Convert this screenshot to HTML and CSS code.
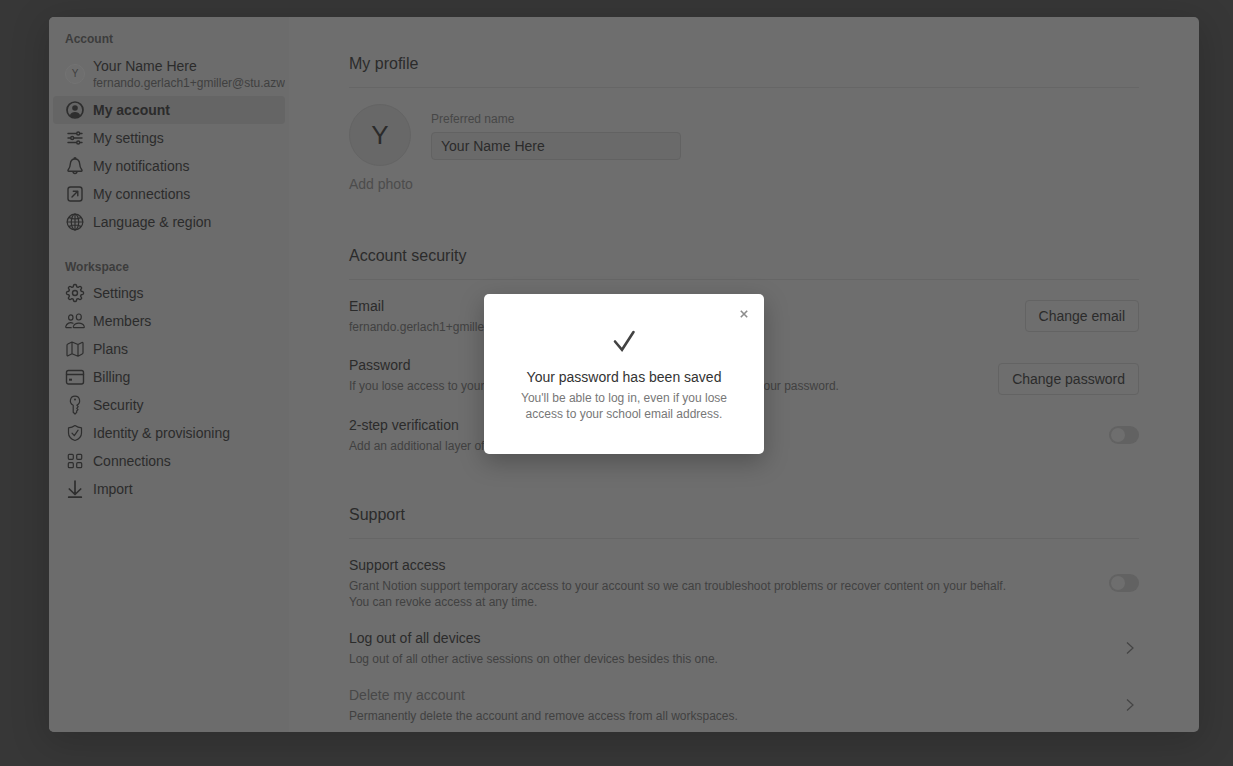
FILE: index.html
```html
<!DOCTYPE html>
<html lang="en">
<head>
<meta charset="utf-8">
<title>My account</title>
<link rel="stylesheet" href="styles.css">
</head>
<body>
<div class="screen">
  <div class="window">
    <nav class="sidebar">
      <section class="group">
        <h2 class="group-title">Account</h2>
        <div class="user">
          <span class="user-avatar">Y</span>
          <div class="user-text">
            <div class="user-name">Your Name Here</div>
            <div class="user-email">fernando.gerlach1+gmiller@stu.azwestern.edu</div>
          </div>
        </div>
        <a class="item item-active" href="#account"><svg class="icon icon-bold" viewBox="0 0 20 20"><circle cx="10" cy="10" r="8"/><circle class="fill" cx="10" cy="8" r="2.8"/><path class="fill" d="M4.8 15.3c1-2.3 2.800-3.200 5.200-3.200s4.200.9 5.200 3.200c-1.500 1.600-3.200 2.400-5.200 2.400s-3.700-.8-5.200-2.400z"/></svg>My account</a>
        <a class="item" href="#settings"><svg class="icon" viewBox="0 0 20 20"><path d="M3 5.500h8.500M15 5.500h2M3 10h2.500M9 10h8M3 14.500h8.500M15 14.500h2"/><circle cx="13.200" cy="5.500" r="1.500"/><circle cx="7.200" cy="10" r="1.500"/><circle cx="13.200" cy="14.500" r="1.500"/></svg>My settings</a>
        <a class="item" href="#notifications"><svg class="icon" viewBox="0 0 20 20"><path d="M10 3C7 3 5.500 5.200 5.300 8c-.2 3-.8 4.300-1.900 5.500-.8.900-.5 1.700.5 1.700h12.200c1 0 1.300-.8.500-1.700-1.100-1.200-1.700-2.500-1.900-5.500C14.500 5.200 13 3 10 3zM9 3c0-1.600 2-1.600 2 0M8 15.500c.2 2.700 3.800 2.700 4 0"/></svg>My notifications</a>
        <a class="item" href="#connections"><svg class="icon" viewBox="0 0 20 20"><rect x="3" y="3" width="14" height="14" rx="2.500"/><path d="M7 13l5.700-5.700M8.300 7.200h4.500v4.500"/></svg>My connections</a>
        <a class="item" href="#language"><svg class="icon icon-thin" viewBox="0 0 20 20"><circle cx="10" cy="10" r="7.800"/><ellipse cx="10" cy="10" rx="3.700" ry="7.800"/><path d="M2.200 10h15.600M10 2.200v15.600M4.200 5.600c3.500 1.700 8.100 1.700 11.600 0M4.200 14.400c3.500-1.700 8.100-1.700 11.600 0"/></svg>Language &amp; region</a>
      </section>
      <section class="group">
        <h2 class="group-title">Workspace</h2>
        <a class="item" href="#ws-settings"><svg class="icon" viewBox="0 0 20 20"><path d="M8.600 2.200c.3-1 2.500-1 2.800 0l.4 1.600 1.300.6 1.500-.9c.9-.5 2.400 1 1.900 1.900l-.9 1.500.6 1.300 1.600.4c1 .3 1 2.500 0 2.800l-1.600.4-.6 1.300.9 1.500c.5.900-1 2.400-1.900 1.900l-1.500-.9-1.300.6-.4 1.600c-.3 1-2.500 1-2.800 0l-.4-1.600-1.300-.6-1.500.9c-.9.500-2.400-1-1.900-1.900l.9-1.500-.6-1.300-1.600-.4c-1-.3-1-2.500 0-2.800l1.600-.4.6-1.300-.9-1.500c-.5-.9 1-2.400 1.900-1.900l1.500.9 1.300-.6z"/><circle cx="10" cy="10" r="2.500"/></svg>Settings</a>
        <a class="item" href="#members"><svg class="icon icon-thin" viewBox="0 0 20 20"><ellipse cx="5.800" cy="6.500" rx="2.200" ry="2.600"/><ellipse cx="13.800" cy="6" rx="2.500" ry="3"/><path d="M8 12.200c-3-1.400-6.400.2-7.200 3.200-.2.800.2 1.300 1 1.300h4.400M9.400 16.700h8.800c.9 0 1.300-.5 1-1.300-1.500-4.300-9.300-4.300-10.800 0-.3.800.1 1.300 1 1.300z"/></svg>Members</a>
        <a class="item" href="#plans"><svg class="icon icon-thin" viewBox="0 0 20 20"><path d="M2 6.200c0-.6.300-1 .8-1.200L7 3l6 2.500 4-2c.6-.3 1 0 1 .6v9.700c0 .6-.3 1-.8 1.200L13 17.200l-6-2.500-4 2c-.6.300-1 0-1-.6zM7 3v11.700M13 5.500v11.700"/></svg>Plans</a>
        <a class="item" href="#billing"><svg class="icon" viewBox="0 0 20 20"><rect x="1.500" y="3.500" width="17" height="13.500" rx="2"/><path d="M1.500 7.500h17"/><path class="fill" d="M4 11.700h3v2H4z"/></svg>Billing</a>
        <a class="item" href="#security"><svg class="icon icon-thin" viewBox="0 0 20 20"><path d="M8.200 10.200C3.700 8.200 4.800 1.200 10 1.200s6.300 7 1.800 9l1.400 1.500-1.400 1.600 1.200 1.400-1.300 1.300v1.300L10 19l-1.800-1.700z"/><circle class="fill" cx="10" cy="4.500" r="1"/></svg>Security</a>
        <a class="item" href="#identity"><svg class="icon icon-thin" viewBox="0 0 20 20"><path d="M10 2.500c2 1.400 4 2.100 6.500 2.300V10c0 3.700-2.300 6-6.500 7.500C5.800 16 3.500 13.700 3.500 10V4.800C6 4.600 8 3.900 10 2.500z"/><path d="M7 10.200l2.300 2.500 3.800-5.500"/></svg>Identity &amp; provisioning</a>
        <a class="item" href="#ws-connections"><svg class="icon icon-thin" viewBox="0 0 20 20"><rect x="3.300" y="3.300" width="5" height="5" rx="1"/><rect x="11.700" y="3.300" width="5" height="5" rx="1"/><rect x="3.300" y="11.700" width="5" height="5" rx="1"/><rect x="11.700" y="11.700" width="5" height="5" rx="1"/></svg>Connections</a>
        <a class="item" href="#import"><svg class="icon icon-bold" viewBox="0 0 20 20"><path d="M10 2v13M4.300 10l5.700 5.500 5.700-5.500M3.700 18.200h12.600"/></svg>Import</a>
      </section>
    </nav>

    <main class="content">
      <section class="block">
        <h1 class="block-title">My profile</h1>
        <div class="profile">
          <div class="avatar">Y</div>
          <div class="field">
            <label class="field-label" for="name">Preferred name</label>
            <input class="field-input" id="name" type="text" value="Your Name Here">
          </div>
        </div>
        <button class="add-photo" type="button">Add photo</button>
      </section>

      <section class="block">
        <h1 class="block-title">Account security</h1>
        <div class="rows rows-tall">
          <div class="row">
            <div class="row-text"><div class="row-title">Email</div><div class="row-desc">fernando.gerlach1+gmiller@stu.azwestern.edu</div></div>
            <button class="btn" type="button">Change email</button>
          </div>
          <div class="row row-end">
            <div class="row-text"><div class="row-title">Password</div><div class="row-desc">If you lose access to your school email address, you'll be able to log in using your password.</div></div>
            <button class="btn" type="button">Change password</button>
          </div>
          <div class="row">
            <div class="row-text"><label class="row-title" for="two-step">2-step verification</label><div class="row-desc">Add an additional layer of security to your account.</div></div>
            <input class="toggle" id="two-step" type="checkbox" role="switch">
          </div>
        </div>
      </section>

      <section class="block">
        <h1 class="block-title">Support</h1>
        <div class="rows">
          <div class="row">
            <div class="row-text"><label class="row-title" for="support">Support access</label><div class="row-desc">Grant Notion support temporary access to your account so we can troubleshoot problems or recover content on your behalf. You can revoke access at any time.</div></div>
            <input class="toggle" id="support" type="checkbox" role="switch">
          </div>
          <div class="row">
            <div class="row-text"><div class="row-title">Log out of all devices</div><div class="row-desc">Log out of all other active sessions on other devices besides this one.</div></div>
            <button class="chevron" type="button" aria-label="Log out of all devices"><svg viewBox="0 0 18 18"><path d="M6 3.500l6 5.500-6 5.500"/></svg></button>
          </div>
          <div class="row">
            <div class="row-text"><div class="row-title row-title-muted">Delete my account</div><div class="row-desc">Permanently delete the account and remove access from all workspaces.</div></div>
            <button class="chevron" type="button" aria-label="Delete my account"><svg viewBox="0 0 18 18"><path d="M6 3.500l6 5.500-6 5.500"/></svg></button>
          </div>
        </div>
      </section>
    </main>

    <div class="dialog" role="dialog" aria-labelledby="saved">
      <button class="close" type="button" aria-label="Close"><svg viewBox="0 0 10 10"><path d="M1 1l8 8M9 1l-8 8"/></svg></button>
      <svg class="check" viewBox="0 0 24 24"><path d="M3 12.500l7 8.300L21.500 3"/></svg>
      <h2 class="dialog-title" id="saved">Your password has been saved</h2>
      <p class="dialog-text">You'll be able to log in, even if you lose access to your school email address.</p>
    </div>
  </div>
</div>
</body>
</html>
```
FILE: styles.css
```css
* { box-sizing: border-box; }
body {
  margin: 0;
  background: #373737;
  color: #2b2b2b;
  font: 14px/20px "Liberation Sans", Arial, sans-serif;
}
h1, h2, p { margin: 0; font-weight: normal; }
button, input { font: inherit; color: inherit; }
button { cursor: pointer; }

.screen {
  height: 100vh;
  min-height: 600px;
  padding: 17px 34px 34px 49px;
}
.window {
  position: relative;
  display: flex;
  height: 100%;
  border-radius: 5px;
  background: #6e6e6e;
  box-shadow: 0 8px 36px 4px rgba(0, 0, 0, 0.16);
}

.sidebar {
  flex: none;
  width: 240px;
  padding: 12px 4px;
  display: flex;
  flex-direction: column;
  gap: 21px;
  border-radius: 5px 0 0 5px;
  background: #6c6c6c;
}
.group-title {
  padding: 0 12px;
  margin-bottom: 2px;
  font-size: 12px;
  font-weight: bold;
  color: #3c3c3c;
}
.user {
  display: flex;
  align-items: center;
  gap: 8px;
  height: 45px;
  padding: 0 0 0 12px;
}
.user-avatar {
  flex: none;
  width: 20px;
  height: 20px;
  border: 1px solid #737373;
  border-radius: 50%;
  background: #6e6e6e;
  color: #404040;
  font-size: 10px;
  line-height: 18px;
  text-align: center;
}
.user-text { min-width: 0; overflow: hidden; white-space: nowrap; }
.user-name { line-height: 18px; }
.user-email { font-size: 12px; line-height: 16px; color: #404040; }
.item {
  display: flex;
  align-items: center;
  gap: 8px;
  width: 232px;
  height: 28px;
  padding: 0 12px;
  border-radius: 4px;
  color: #2b2b2b;
  text-decoration: none;
}
.item-active { background: #656565; font-weight: bold; }
.icon {
  flex: none;
  width: 20px;
  height: 20px;
  fill: none;
  stroke: #2e2e2e;
  stroke-width: 1.4;
  stroke-linecap: round;
  stroke-linejoin: round;
}
.icon-thin { stroke-width: 1.2; }
.icon-bold { stroke-width: 1.7; }
.icon .fill { fill: #2e2e2e; stroke: none; }

.content {
  flex: 1;
  min-width: 0;
  overflow: hidden;
  padding: 37px 60px 0;
}
.block { margin-bottom: 49px; }
.block-title {
  padding-bottom: 13px;
  margin-bottom: 16px;
  border-bottom: 1px solid #666;
  font-size: 16px;
}
.profile { display: flex; gap: 20px; }
.avatar {
  width: 62px;
  height: 62px;
  border: 1px solid #646464;
  border-radius: 50%;
  background: #686868;
  font-size: 26px;
  line-height: 60px;
  text-align: center;
}
.field { display: flex; flex-direction: column; gap: 3px; padding-top: 5px; }
.field-label { font-size: 12px; color: #474747; }
.field-input {
  width: 250px;
  height: 28px;
  padding: 0 9px;
  border: 1px solid #626262;
  border-radius: 4px;
  background: #6a6a6a;
}
.add-photo {
  display: block;
  margin-top: 8px;
  padding: 0 0 3px;
  border: 0;
  background: none;
  color: #4c4c4c;
}

.rows { display: flex; flex-direction: column; gap: 18px; }
.row { display: flex; align-items: center; justify-content: space-between; gap: 60px; }
.rows-tall { gap: 20px; padding-bottom: 2px; }
.rows .row-end { align-items: flex-end; min-height: 40px; }
.row-text { align-self: flex-start; max-width: 680px; }
.row-title { display: block; margin-bottom: 3px; }
.row-title-muted { color: #484848; }
.row-desc { font-size: 12px; line-height: 16px; color: #414141; }
.btn {
  flex: none;
  height: 32px;
  padding: 0 13px;
  border: 1px solid #636363;
  border-radius: 4px;
  background: none;
}
.toggle {
  appearance: none;
  flex: none;
  display: flex;
  width: 30px;
  height: 18px;
  margin: 0;
  padding: 2px;
  border-radius: 9px;
  background: #626262;
}
.toggle::before {
  content: "";
  width: 14px;
  height: 14px;
  border-radius: 50%;
  background: #6e6e6e;
}
.chevron { flex: none; padding: 0; border: 0; background: none; }
.chevron svg {
  display: block;
  width: 18px;
  height: 18px;
  fill: none;
  stroke: #444;
  stroke-width: 1.2;
}

.dialog {
  position: absolute;
  top: calc(50% - 81px);
  left: calc(50% - 140px);
  width: 280px;
  padding: 35px 32px 32px;
  border-radius: 5px;
  background: #fff;
  box-shadow: 0 8px 24px rgba(0, 0, 0, 0.26);
  text-align: center;
}
.close {
  position: absolute;
  top: 12px;
  right: 12px;
  width: 16px;
  height: 16px;
  padding: 4px;
  border: 0;
  background: none;
}
.close svg { display: block; width: 8px; height: 8px; fill: none; stroke: #8c8c8c; stroke-width: 2; }
.check {
  display: block;
  width: 24px;
  height: 24px;
  margin: 0 auto 14px;
  fill: none;
  stroke: #424242;
  stroke-width: 2.6;
  stroke-linecap: round;
}
.dialog-title { font-size: 14px; line-height: 20px; color: #333; }
.dialog-text { margin-top: 3px; font-size: 12px; line-height: 16px; color: #777; }
```
